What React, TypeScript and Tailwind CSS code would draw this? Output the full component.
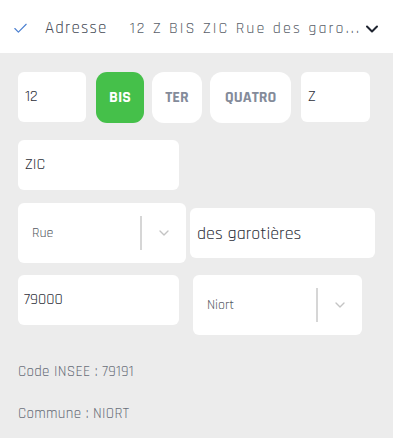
import { ChevronDown, Check } from "lucide-react";

const font = { fontFamily: "Rajdhani, 'Roboto', 'Liberation Sans', sans-serif" };

function Select({ label, className }: { label: string; className: string }) {
  return (
    <div className={`flex items-center rounded-md bg-white ${className}`}>
      <span className="flex-1 pl-[14px] text-[14px] text-[#555a63]">{label}</span>
      <span className="h-[34px] w-[2px] bg-[#d6d6d6]" />
      <span className="flex w-[44px] justify-center">
        <ChevronDown size={16} strokeWidth={2} className="text-[#c4c4c4]" />
      </span>
    </div>
  );
}

export default function App() {
  return (
    <div className="flex h-[438px] w-[395px] bg-white" style={font}>
      <div className="flex w-[393px] flex-col bg-[#ececec]">
        <div className="flex h-[53px] items-center bg-white pt-[4px]">
          <Check size={17} strokeWidth={1.6} className="ml-[12px] text-[#4a7fd0]" />
          <span className="ml-[16px] text-[17px] tracking-[0.07em] text-[#454a55]">Adresse</span>
          <span className="ml-[22px] w-[232px] whitespace-nowrap text-[16px] tracking-[0.13em] text-[#5a5f6a]">
            12 Z BIS ZIC Rue des garo...
          </span>
          <ChevronDown size={20} strokeWidth={2.4} className="text-[#1f2430]" />
        </div>

        <div className="flex flex-col px-[18px] pt-[19px] text-[#2d303a]">
          <div className="flex items-start">
            <div className="flex h-[50px] w-[68px] items-center rounded-md bg-white pl-[7px] text-[16px]">12</div>
            <div className="ml-[10px] flex h-[51px] w-[48px] items-center justify-center rounded-[11px] bg-[#45c04a] text-[16px] font-bold text-white">
              BIS
            </div>
            <div className="ml-[8px] flex h-[51px] w-[50px] items-center justify-center rounded-[12px] bg-white text-[16px] font-bold text-[#848b9a]">
              TER
            </div>
            <div className="ml-[8px] flex h-[51px] w-[81px] items-center justify-center rounded-[12px] bg-white text-[16px] font-bold text-[#848b9a]">
              QUATRO
            </div>
            <div className="ml-[10px] flex h-[50px] w-[69px] items-center rounded-md bg-white pl-[7px] text-[16px]">Z</div>
          </div>

          <div className="mt-[17px] flex h-[50px] w-[161px] items-center rounded-md bg-white pl-[7px] text-[16px]">ZIC</div>

          <div className="mt-[13px] flex items-center">
            <Select label="Rue" className="h-[60px] w-[169px]" />
            <div className="ml-[4px] flex h-[50px] w-[186px] items-center rounded-md bg-white pl-[7px] text-[18px]">
              des garotières
            </div>
          </div>

          <div className="mt-[12px] flex items-start">
            <div className="flex h-[50px] w-[161px] items-center rounded-md bg-white pl-[6px] text-[16px]">79000</div>
            <Select label="Niort" className="ml-[14px] h-[60px] w-[169px]" />
          </div>

          <div className="mt-[26px] text-[15px] tracking-[0.02em] text-[#6a6f7a]">Code INSEE : 79191</div>
          <div className="mt-[19px] text-[15px] tracking-[0.02em] text-[#6a6f7a]">Commune : NIORT</div>
        </div>
      </div>
    </div>
  );
}
